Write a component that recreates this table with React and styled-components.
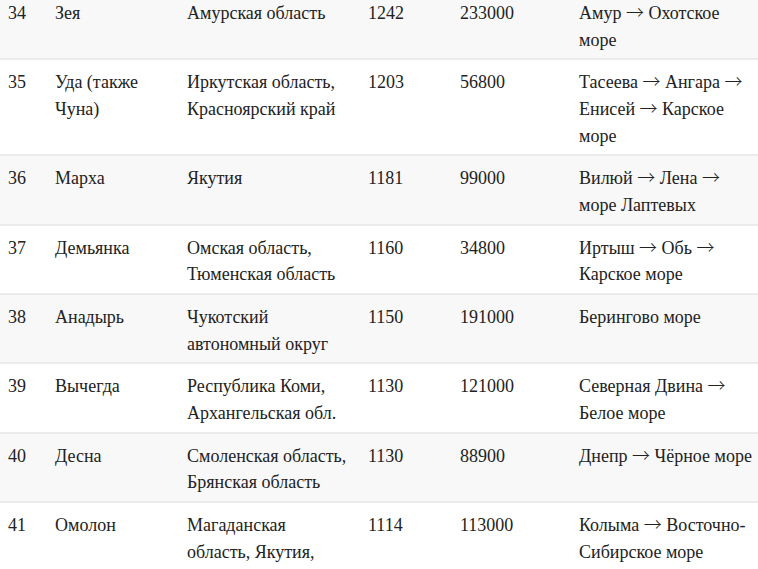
import styled, { createGlobalStyle } from "styled-components";

const rivers = [
  { n: 34, name: "Зея", region: "Амурская область", len: 1242, basin: 233000, mouth: "Амур → Охотское море" },
  { n: 35, name: "Уда (также Чуна)", region: "Иркутская область, Красноярский край", len: 1203, basin: 56800, mouth: "Тасеева → Ангара → Енисей → Карское море" },
  { n: 36, name: "Марха", region: "Якутия", len: 1181, basin: 99000, mouth: "Вилюй → Лена → море Лаптевых" },
  { n: 37, name: "Демьянка", region: "Омская область, Тюменская область", len: 1160, basin: 34800, mouth: "Иртыш → Обь → Карское море" },
  { n: 38, name: "Анадырь", region: "Чукотский автономный округ", len: 1150, basin: 191000, mouth: "Берингово море" },
  { n: 39, name: "Вычегда", region: "Республика Коми, Архангельская обл.", len: 1130, basin: 121000, mouth: "Северная Двина → Белое море" },
  { n: 40, name: "Десна", region: "Смоленская область, Брянская область", len: 1130, basin: 88900, mouth: "Днепр → Чёрное море" },
  { n: 41, name: "Омолон", region: "Магаданская область, Якутия, Чукотка", len: 1114, basin: 113000, mouth: "Колыма → Восточно-Сибирское море" },
];

const widths = [47, 132, 181, 92, 119, 192];

// arrows come from a font with a full-width thin arrow, like the reference
function Mouth({ text }) {
  const parts = text.split("→");
  return parts.map((p, i) => (
    <span key={i}>
      {p}
      {i < parts.length - 1 && <Arrow>→</Arrow>}
    </span>
  ));
}

function App() {
  return (
    <>
      <GlobalStyle />
      <Page>
        <Table>
          <colgroup>
            {widths.map((w, i) => (
              <col key={i} style={{ width: w }} />
            ))}
          </colgroup>
          <tbody>
            {rivers.map((r, i) => (
              <Row key={r.n} $striped={i % 2 === 0}>
                <Cell>{r.n}</Cell>
                <Cell>{r.name}</Cell>
                <Cell>{r.region}</Cell>
                <Cell>{r.len}</Cell>
                <Cell>{r.basin}</Cell>
                <Cell>
                  <Mouth text={r.mouth} />
                </Cell>
              </Row>
            ))}
          </tbody>
        </Table>
      </Page>
    </>
  );
}

export default App;

const GlobalStyle = createGlobalStyle`
  html, body {
    margin: 0;
    padding: 0;
    background: #fff;
    overflow: hidden;
  }
`;

const Page = styled.div`
  width: 758px;
  overflow: hidden;
  margin-top: -9px;
`;

const Table = styled.table`
  width: 763px;
  table-layout: fixed;
  border-collapse: collapse;
  font-family: "Liberation Serif", "Times New Roman", serif;
  font-size: 18px;
  line-height: 26.67px;
  color: #222;
`;

const Row = styled.tr`
  background: ${(props) => (props.$striped ? "#f8f8f8" : "#fff")};
  border-bottom: 2px solid #ebebeb;
`;

const Cell = styled.td`
  padding: 9px 8px 5px;
  vertical-align: top;
  text-align: left;
`;

const Arrow = styled.span`
  font-family: "Noto Sans CJK SC", sans-serif;
  font-size: 18px;
  font-weight: 300;
  line-height: 1;
`;
